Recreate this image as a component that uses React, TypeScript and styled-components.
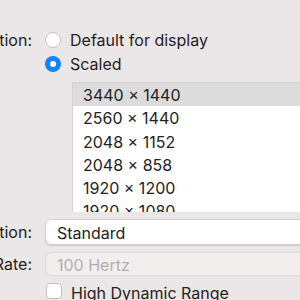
import React from 'react';
import { styled, createGlobalStyle } from 'styled-components';

const GlobalStyle = createGlobalStyle`
  html, body {
    margin: 0;
    padding: 0;
    background: #ebe6e7;
    overflow: hidden;
  }
  body {
    font-family: Inter, "Liberation Sans", sans-serif;
    font-size: 16px;
    color: #242222;
  }
`;

const Panel = styled.div`
  width: 300px;
  height: 300px;
  overflow: hidden;
  display: grid;
  grid-template-columns: 32px 1fr;
  column-gap: 13px;
  padding-top: 28px;
  box-sizing: border-box;
`;

const Label = styled.div<{ $h: number; $mt?: number }>`
  height: ${p => p.$h}px;
  margin-top: ${p => p.$mt || 0}px;
  display: flex;
  justify-content: flex-end;
  align-items: center;
  white-space: nowrap;
`;

const Cell = styled.div<{ $h: number; $mt?: number }>`
  height: ${p => p.$h}px;
  margin-top: ${p => p.$mt || 0}px;
  display: flex;
  align-items: center;
  gap: 9px;
  white-space: nowrap;
  min-width: 0;
`;

const Radio = styled.span<{ $on?: boolean }>`
  width: 16px;
  height: 16px;
  border-radius: 50%;
  box-sizing: border-box;
  flex: none;
  background: ${p => (p.$on ? '#1283fb' : '#ffffff')};
  border: ${p => (p.$on ? 'none' : '1px solid #c9c5c5')};
  display: flex;
  align-items: center;
  justify-content: center;
  &::after {
    content: '';
    width: 6px;
    height: 6px;
    border-radius: 50%;
    background: #fff;
    display: ${p => (p.$on ? 'block' : 'none')};
  }
`;

const ListBox = styled.div`
  margin-left: 27px;
  margin-top: 6px;
  height: 130px;
  width: 400px;
  background: #ffffff;
  border-left: 1px solid #d6d2d2;
  border-top: 1px solid #d6d2d2;
  box-sizing: border-box;
  overflow: hidden;
`;

const ListRow = styled.div<{ $sel?: boolean }>`
  height: 23.3px;
  line-height: 23.3px;
  padding-left: 10px;
  padding-top: 1px;
  box-sizing: border-box;
  background: ${p => (p.$sel ? '#dcdcdc' : 'transparent')};
`;

const Popup = styled.div<{ $disabled?: boolean }>`
  width: 400px;
  height: 100%;
  box-sizing: border-box;
  border-radius: 6px;
  padding-left: 11px;
  padding-top: 1px;
  display: flex;
  align-items: center;
  background: ${p => (p.$disabled ? '#f2eeee' : '#ffffff')};
  color: ${p => (p.$disabled ? '#b3adae' : '#242222')};
  border: 1px solid ${p => (p.$disabled ? '#dcd8d8' : '#d4d0d0')};
  box-shadow: ${p => (p.$disabled ? 'none' : '0 1px 1px rgba(0,0,0,0.12)')};
`;

const Check = styled.span`
  width: 16px;
  height: 16px;
  box-sizing: border-box;
  border: 1px solid #c4c0c0;
  border-radius: 4px;
  background: #fff;
  flex: none;
  margin-left: 1px;
  align-self: flex-start;
`;

const resolutions = ['3440 × 1440', '2560 × 1440', '2048 × 1152', '2048 × 858', '1920 × 1200', '1920 × 1080'];

export default function App() {
  return (
    <>
      <GlobalStyle />
      <Panel>
        <Label $h={24}>Resolution:</Label>
        <Cell $h={24}>
          <Radio />
          <span>Default for display</span>
        </Cell>

        <div />
        <Cell $h={24}>
          <Radio $on />
          <span>Scaled</span>
        </Cell>

        <div />
        <ListBox>
          {resolutions.map((r, i) => (
            <ListRow key={r} $sel={i === 0}>{r}</ListRow>
          ))}
        </ListBox>

        <Label $h={26} $mt={7}>Rotation:</Label>
        <Cell $h={26} $mt={7}>
          <Popup>Standard</Popup>
        </Cell>

        <Label $h={24} $mt={7}>Refresh Rate:</Label>
        <Cell $h={24} $mt={7}>
          <Popup $disabled>100 Hertz</Popup>
        </Cell>

        <div />
        <Cell $h={20} $mt={7}>
          <Check />
          <span>High Dynamic Range</span>
        </Cell>
      </Panel>
    </>
  );
}
